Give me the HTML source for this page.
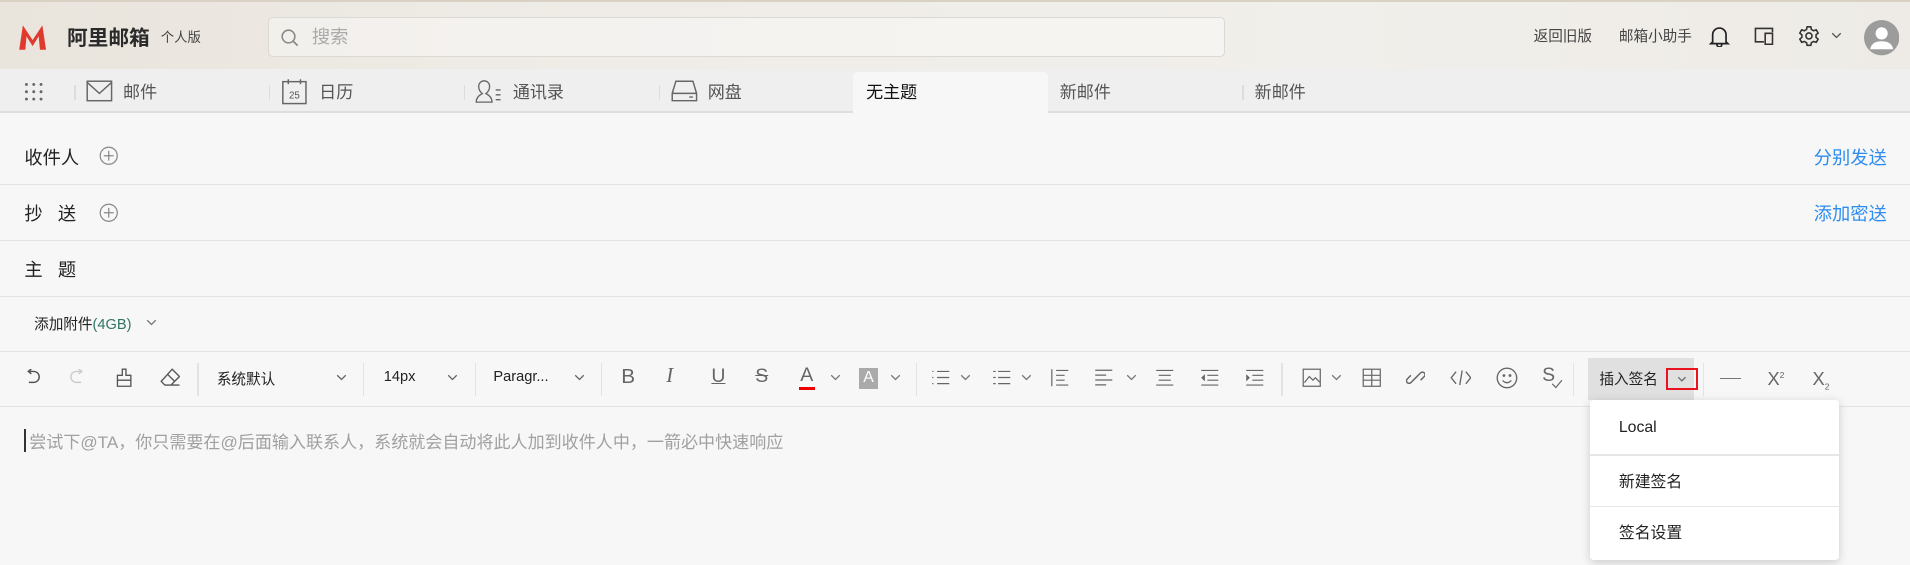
<!DOCTYPE html>
<html><head><meta charset="utf-8"><style>
html{zoom:1.21811}
*{margin:0;padding:0;box-sizing:border-box}
body{width:1568px;height:464px;overflow:hidden;background:#f7f7f7;font-family:"Liberation Sans","Noto Sans CJK SC",sans-serif;color:#333;position:relative}
.a{position:absolute;white-space:nowrap}
.hdr{position:absolute;left:0;top:0;width:1568px;height:57px;background:linear-gradient(90deg,#e9e4dc,#efece7 30%,#f1efeb 70%,#eeebe6);border-top:2px solid #d9d2c4}
.tabs{position:absolute;left:0;top:57px;width:1568px;height:36px;background:#efefef;border-bottom:2px solid #dedede}
.tab{position:absolute;top:7px;font-size:14px;color:#555}
.sep{position:absolute;top:13px;width:1px;height:12px;background:#ddd}
.line{position:absolute;left:0;width:1568px;height:1px;background:#e3e3e3}
.lbl{position:absolute;left:20px;font-size:15px;color:#222}
.tsep{position:absolute;top:298px;width:1px;height:27px;background:#e3e3e3}
.ti{position:absolute;color:#666;font-size:15px}
svg{position:absolute}
</style></head><body>
<div class="hdr">
<svg style="left:15px;top:17px" width="24" height="24" viewBox="0 0 24 24"><path d="M1 22 L4 2 L12 14 L20 2 L23 22 L18 22 L17 11 L12 19 L7 11 L6 22Z" fill="#e03a2f"/></svg>
<div class="a" style="left:55px;top:16px;font-size:17px;font-weight:bold;color:#2a2a2a">阿里邮箱</div>
<div class="a" style="left:132px;top:20px;font-size:11px;color:#444">个人版</div>
<div class="a" style="left:220px;top:12px;width:786px;height:33px;border:1px solid #dcd9d4;border-radius:4px;background:rgba(255,255,255,.35)"></div>
<svg style="left:230px;top:21px" width="16" height="16" viewBox="0 0 16 16"><circle cx="7" cy="7" r="5.2" fill="none" stroke="#888" stroke-width="1.3"/><path d="M11 11l3.5 3.5" stroke="#888" stroke-width="1.4"/></svg>
<div class="a" style="left:256px;top:17px;font-size:15px;color:#aaa">搜索</div>
<div class="a" style="left:1259px;top:19px;font-size:12px;color:#444">返回旧版</div>
<div class="a" style="left:1329px;top:19px;font-size:12px;color:#444">邮箱小助手</div>
<svg style="left:1403px;top:19px" width="17" height="18" viewBox="0 0 17 18"><path d="M3 14V8a5.5 5.5 0 0 1 11 0v6l1.5 1.3H1.5Z M6.5 16a2 2 0 0 0 4 0" fill="none" stroke="#222" stroke-width="1.4"/></svg>
<svg style="left:1439px;top:20px" width="18" height="16" viewBox="0 0 18 16"><path d="M9 13H2V2h14v3 M10 6h6v9h-6z" fill="none" stroke="#333" stroke-width="1.3"/></svg>
<svg style="left:1476px;top:19px" width="18" height="18" viewBox="0 0 18 18"><path d="M7.5 1.5h3l.5 2.2 1.8 1 2.2-.7 1.5 2.6-1.7 1.5v2l1.7 1.5-1.5 2.6-2.2-.7-1.8 1-.5 2.2h-3L7 14.5l-1.8-1-2.2.7-1.5-2.6 1.7-1.5v-2L1.5 6.6 3 4l2.2.7L7 3.7Z" fill="none" stroke="#333" stroke-width="1.3"/><circle cx="9" cy="9" r="2.5" fill="none" stroke="#333" stroke-width="1.3"/></svg>
<svg style="left:1503px;top:25px" width="9" height="6" viewBox="0 0 9 6"><path d="M1 1l3.5 3.5L8 1" fill="none" stroke="#555" stroke-width="1.1"/></svg>
<svg style="left:1530px;top:15px" width="29" height="29" viewBox="0 0 29 29"><circle cx="14.5" cy="14.5" r="14.5" fill="#9c9c9c"/><circle cx="14.5" cy="11" r="5" fill="#fff"/><path d="M5 24c1-5 5-6.5 9.5-6.5S23 19 24 24Z" fill="#fff"/></svg>
</div>
<div class="tabs">
<svg style="left:20px;top:10px" width="16" height="16" viewBox="0 0 16 16" fill="#666"><circle cx="2" cy="2" r="1.2"/><circle cx="8" cy="2" r="1.2"/><circle cx="14" cy="2" r="1.2"/><circle cx="2" cy="8" r="1.2"/><circle cx="8" cy="8" r="1.2"/><circle cx="14" cy="8" r="1.2"/><circle cx="2" cy="14" r="1.2"/><circle cx="8" cy="14" r="1.2"/><circle cx="14" cy="14" r="1.2"/></svg>
<div class="sep" style="left:61px"></div><div class="sep" style="left:221px"></div><div class="sep" style="left:381px"></div><div class="sep" style="left:541px"></div><div class="sep" style="left:1020px"></div>
<svg style="left:71px;top:9px" width="22" height="18" viewBox="0 0 22 18"><rect x="1" y="1" width="20" height="16" fill="none" stroke="#666" stroke-width="1.2"/><path d="M1 2l10 9 10-9" fill="none" stroke="#666" stroke-width="1.2"/></svg>
<div class="tab" style="left:101px">邮件</div>
<svg style="left:231px;top:7px" width="22" height="22" viewBox="0 0 22 22"><rect x="1.5" y="3" width="19" height="18" fill="none" stroke="#666" stroke-width="1.2"/><path d="M6 1v4M16 1v4" stroke="#666" stroke-width="1.2"/><text x="11" y="17" font-size="8" text-anchor="middle" fill="#555" font-family="Liberation Sans">25</text></svg>
<div class="tab" style="left:262px">日历</div>
<svg style="left:390px;top:8px" width="26" height="20" viewBox="0 0 26 20"><path d="M1 19c0-4 3-6 5-7-2-1.5-3-3-3-6a4.5 4.5 0 0 1 9 0c0 3-1 4.5-3 6 2 1 5 3 5 7Z" fill="none" stroke="#666" stroke-width="1.1"/><path d="M17 9h4M17 13h4M17 17h4" stroke="#666" stroke-width="1.1"/></svg>
<div class="tab" style="left:421px">通讯录</div>
<svg style="left:551px;top:9px" width="22" height="18" viewBox="0 0 22 18"><path d="M4 1h14l3 10v6H1v-6Z M1 11h20 M15 14h3" fill="none" stroke="#666" stroke-width="1.2"/></svg>
<div class="tab" style="left:581px">网盘</div>
<div class="a" style="left:700px;top:2px;width:160px;height:34px;background:#f7f7f7;border-radius:4px 4px 0 0"></div>
<div class="tab" style="left:711px;color:#111">无主题</div>
<div class="tab" style="left:870px">新邮件</div>
<div class="tab" style="left:1030px">新邮件</div>
</div>
<div class="lbl" style="top:118px">收件人</div>
<div class="lbl" style="top:164px">抄&nbsp;&nbsp;&nbsp;送</div>
<div class="lbl" style="top:210px">主&nbsp;&nbsp;&nbsp;题</div>
<svg style="left:81px;top:120px" width="16" height="16" viewBox="0 0 16 16"><circle cx="8" cy="8" r="7" fill="none" stroke="#888" stroke-width="1"/><path d="M8 4v8M4 8h8" stroke="#888"/></svg>
<svg style="left:81px;top:167px" width="16" height="16" viewBox="0 0 16 16"><circle cx="8" cy="8" r="7" fill="none" stroke="#888" stroke-width="1"/><path d="M8 4v8M4 8h8" stroke="#888"/></svg>
<div class="a" style="left:1489px;top:118px;font-size:15px;color:#2d8cf0">分别发送</div>
<div class="a" style="left:1489px;top:164px;font-size:15px;color:#2d8cf0">添加密送</div>
<div class="line" style="top:151px"></div><div class="line" style="top:197px"></div><div class="line" style="top:243px"></div><div class="line" style="top:288px"></div><div class="line" style="top:333px"></div>
<div class="a" style="left:28px;top:257px;font-size:12px;color:#222">添加附件<span style="color:#2f7565">(4GB)</span></div>
<svg style="left:120px;top:262px" width="9" height="6" viewBox="0 0 9 6"><path d="M1 1l3.5 3.5L8 1" fill="none" stroke="#777" stroke-width="1.1"/></svg>

<svg style="left:20px;top:303px" width="14" height="14" viewBox="0 0 14 14"><path d="M4 2h4a4 4 0 0 1 0 9H4 M6 0L3.5 2 6 4" fill="none" stroke="#555" stroke-width="1.2"/></svg>
<svg style="left:57px;top:303px" width="14" height="14" viewBox="0 0 14 14"><path d="M10 2H6a4 4 0 0 0 0 9h4 M8 0l2.5 2L8 4" fill="none" stroke="#ccc" stroke-width="1.2"/></svg>
<svg style="left:94px;top:302px" width="15" height="16" viewBox="0 0 15 16"><path d="M6 1h3v5h4v9H2V6h4Z M2 10h11" fill="none" stroke="#555" stroke-width="1.1"/></svg>
<svg style="left:131px;top:302px" width="17" height="16" viewBox="0 0 17 16"><path d="M10 1l6 6-7 7H4l-3-3Z M6 5l6 6 M4 14h12" fill="none" stroke="#555" stroke-width="1.1"/></svg>
<div class="tsep" style="left:162px"></div>
<div class="a" style="left:178px;top:302px;font-size:12px;color:#222">系统默认</div>
<svg style="left:276px;top:307px" width="9" height="6" viewBox="0 0 9 6"><path d="M1 1l3.5 3.5L8 1" fill="none" stroke="#666" stroke-width="1.1"/></svg>
<div class="tsep" style="left:298px"></div>
<div class="a" style="left:315px;top:303px;font-size:12px;color:#222">14px</div>
<svg style="left:367px;top:307px" width="9" height="6" viewBox="0 0 9 6"><path d="M1 1l3.5 3.5L8 1" fill="none" stroke="#666" stroke-width="1.1"/></svg>
<div class="tsep" style="left:390px"></div>
<div class="a" style="left:405px;top:303px;font-size:12px;color:#222">Paragr...</div>
<svg style="left:471px;top:307px" width="9" height="6" viewBox="0 0 9 6"><path d="M1 1l3.5 3.5L8 1" fill="none" stroke="#666" stroke-width="1.1"/></svg>
<div class="tsep" style="left:493px"></div>
<div class="ti" style="left:510px;top:300px;font-size:17px">B</div>
<div class="ti" style="left:547px;top:300px;font-size:17px;font-style:italic;font-family:'Liberation Serif',serif">I</div>
<div class="ti" style="left:584px;top:300px;font-size:16px;text-decoration:underline">U</div>
<div class="ti" style="left:620px;top:300px;font-size:16px;text-decoration:line-through">S</div>
<div class="ti" style="left:657px;top:299px;font-size:16px">A</div>
<div class="a" style="left:656px;top:318px;width:13px;height:2px;background:#e00"></div>
<svg style="left:681px;top:307px" width="9" height="6" viewBox="0 0 9 6"><path d="M1 1l3.5 3.5L8 1" fill="none" stroke="#777" stroke-width="1.1"/></svg>
<div class="a" style="left:705px;top:302px;width:16px;height:17px;background:#aaa;color:#fff;font-size:13px;text-align:center;line-height:17px">A</div>
<svg style="left:731px;top:307px" width="9" height="6" viewBox="0 0 9 6"><path d="M1 1l3.5 3.5L8 1" fill="none" stroke="#777" stroke-width="1.1"/></svg>
<div class="tsep" style="left:752px"></div>
<svg style="left:764px;top:303px" width="16" height="14" viewBox="0 0 16 14" stroke="#666"><path d="M1 2h1M1 7h1M1 12h1M5 2h10M5 7h10M5 12h10"/></svg>
<svg style="left:788px;top:307px" width="9" height="6" viewBox="0 0 9 6"><path d="M1 1l3.5 3.5L8 1" fill="none" stroke="#777" stroke-width="1.1"/></svg>
<svg style="left:814px;top:303px" width="16" height="14" viewBox="0 0 16 14" stroke="#666"><path d="M1 2h2M1 7h2M1 12h2M5 2h10M5 7h10M5 12h10"/></svg>
<svg style="left:838px;top:307px" width="9" height="6" viewBox="0 0 9 6"><path d="M1 1l3.5 3.5L8 1" fill="none" stroke="#777" stroke-width="1.1"/></svg>
<svg style="left:862px;top:302px" width="16" height="16" viewBox="0 0 16 16" stroke="#666"><path d="M1.5 1v14M5 2h10M5 6h7M5 10h7M5 14h10"/></svg>
<svg style="left:898px;top:303px" width="16" height="14" viewBox="0 0 16 14" stroke="#666"><path d="M1 1h14M1 5h9M1 9h14M1 13h9"/></svg>
<svg style="left:924px;top:307px" width="9" height="6" viewBox="0 0 9 6"><path d="M1 1l3.5 3.5L8 1" fill="none" stroke="#777" stroke-width="1.1"/></svg>
<svg style="left:948px;top:302px" width="16" height="16" viewBox="0 0 16 16" stroke="#666"><path d="M1 2h14M3 6h10M3 10h10M1 14h14"/></svg>
<svg style="left:985px;top:302px" width="16" height="16" viewBox="0 0 16 16" stroke="#666"><path d="M1 2h14M6 6h9M6 10h9M1 14h14"/><path d="M4 5L1 8l3 3" fill="#666" stroke="none"/></svg>
<svg style="left:1022px;top:302px" width="16" height="16" viewBox="0 0 16 16" stroke="#666"><path d="M1 2h14M6 6h9M6 10h9M1 14h14"/><path d="M1 5l3 3-3 3" fill="#666" stroke="none"/></svg>
<div class="tsep" style="left:1052px"></div>
<svg style="left:1069px;top:302px" width="16" height="16" viewBox="0 0 16 16"><rect x="1" y="1" width="14" height="14" fill="none" stroke="#666"/><path d="M2 12l4-5 3 3 2-2 4 4" fill="none" stroke="#666"/></svg>
<svg style="left:1093px;top:307px" width="9" height="6" viewBox="0 0 9 6"><path d="M1 1l3.5 3.5L8 1" fill="none" stroke="#777" stroke-width="1.1"/></svg>
<svg style="left:1118px;top:302px" width="16" height="16" viewBox="0 0 16 16" stroke="#666" fill="none"><rect x="1" y="1" width="14" height="14"/><path d="M8 1v14M1 6h14M1 10h14"/></svg>
<svg style="left:1154px;top:302px" width="16" height="16" viewBox="0 0 16 16" stroke="#666" fill="none" stroke-width="1.2"><path d="M7 9l-3 3a2 2 0 0 1-3-3l3-3 M9 7l3-3a2 2 0 0 1 3 3l-3 3 M6 10l4-4"/></svg>
<svg style="left:1190px;top:302px" width="18" height="16" viewBox="0 0 18 16" stroke="#666" fill="none" stroke-width="1.1"><path d="M5 3L1 8l4 5M13 3l4 5-4 5M10 2L8 14"/></svg>
<svg style="left:1228px;top:301px" width="18" height="18" viewBox="0 0 18 18" stroke="#666" fill="none" stroke-width="1.1"><circle cx="9" cy="9" r="8"/><circle cx="6.5" cy="7" r=".6"/><circle cx="11.5" cy="7" r=".6"/><path d="M5.5 11c2 2.5 5 2.5 7 0"/></svg>
<div class="ti" style="left:1266px;top:299px;font-size:16px">S</div>
<svg style="left:1273px;top:311px" width="10" height="8" viewBox="0 0 10 8"><path d="M1 4l3 3 5-6" fill="none" stroke="#666"/></svg>
<div class="tsep" style="left:1291px"></div>
<div class="a" style="left:1304px;top:294px;width:87px;height:34px;background:#e0e0e0"></div>
<div class="a" style="left:1313px;top:302px;font-size:12px;color:#222">插入签名</div>
<div class="a" style="left:1368px;top:302px;width:26px;height:18px;border:2px solid #e8131f"></div>
<svg style="left:1377px;top:309px" width="8" height="5" viewBox="0 0 8 5"><path d="M1 1l3 3 3-3" fill="none" stroke="#666"/></svg>
<div class="tsep" style="left:1398px"></div>
<div class="a" style="left:1412px;top:310px;width:17px;height:1.5px;background:#777"></div>
<div class="ti" style="left:1451px;top:302px;font-size:15px">X<sup style="font-size:7px">2</sup></div>
<div class="ti" style="left:1488px;top:302px;font-size:15px">X<sub style="font-size:7px">2</sub></div>

<div class="a" style="left:20px;top:352px;width:1px;height:19px;background:#333"></div>
<div class="a" style="left:24px;top:351px;font-size:14px;color:#a0a0a0">尝试下@TA，你只需要在@后面输入联系人，系统就会自动将此人加到收件人中，一箭必中快速响应</div>

<div class="a" style="left:1305px;top:328px;width:205px;height:132px;background:#fff;border-radius:3px;box-shadow:0 2px 8px rgba(0,0,0,.18)">
<div class="a" style="left:24px;top:16px;font-size:13px;color:#222">Local</div>
<div class="a" style="left:0;top:45px;width:205px;height:1px;background:#e6e6e6"></div>
<div class="a" style="left:24px;top:57px;font-size:13px;color:#222">新建签名</div>
<div class="a" style="left:0;top:87px;width:205px;height:1px;background:#e6e6e6"></div>
<div class="a" style="left:24px;top:99px;font-size:13px;color:#222">签名设置</div>
</div>
</body></html>
